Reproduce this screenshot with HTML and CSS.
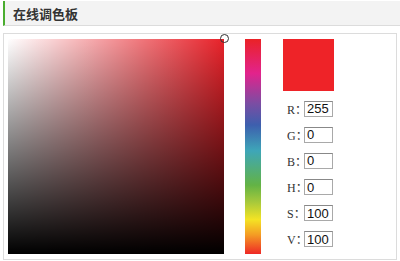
FILE: index.html
```html
<!DOCTYPE html>
<html>
    <head>
        <meta charset="UTF-8">
        <title>在线调色板</title>
        <link rel="stylesheet" href="styles.css">
    </head>
    <body>
        <div class="title-bar">
            <h2 class="title">在线调色板</h2>
        </div>
        <div class="picker">
            <div class="sat-box">
                <div class="sat-white"></div>
                <div class="sat-black"></div>
                <span class="marker"></span>
            </div>
            <div class="hue-bar"></div>
            <div class="side">
                <div class="swatch"></div>
                <div class="fields">
                    <div class="field"><label class="field-label">R：</label><input class="field-input" type="text" value="255"></div>
                    <div class="field"><label class="field-label">G：</label><input class="field-input" type="text" value="0"></div>
                    <div class="field"><label class="field-label">B：</label><input class="field-input" type="text" value="0"></div>
                    <div class="field"><label class="field-label">H：</label><input class="field-input" type="text" value="0"></div>
                    <div class="field"><label class="field-label">S：</label><input class="field-input" type="text" value="100"></div>
                    <div class="field"><label class="field-label">V：</label><input class="field-input" type="text" value="100"></div>
                </div>
            </div>
        </div>
    </body>
</html>
```
FILE: styles.css
```css
html {
    background-color: #fff;
}

body {
    margin: 0;
    font-family: "Liberation Sans", Arial, sans-serif;
}

.title-bar {
    margin: 1px 0 0 3px;
    height: 24px;
    background-color: #f3f3f3;
    border-left: 2px solid #4aad2f;
    border-bottom: 1px solid #dcdcdc;
    display: flex;
    align-items: center;
}

.title {
    margin: 0 0 0 8px;
    font-family: "Noto Sans CJK SC", sans-serif;
    font-size: 13px;
    font-weight: bold;
    color: #333;
    line-height: 1;
}

.picker {
    margin: 7px 3px 0 3px;
    border: 1px solid #dcdcdc;
    padding: 5px 4px;
    display: flex;
    box-sizing: border-box;
    height: 227px;
}

.sat-box {
    position: relative;
    width: 216px;
    height: 215px;
    background-color: #e8222a;
}

.sat-white {
    position: absolute;
    inset: 0;
    background: linear-gradient(to right, #fff, rgba(255, 255, 255, 0));
}

.sat-black {
    position: absolute;
    inset: 0;
    background: linear-gradient(to bottom, rgba(0, 0, 0, 0), #000);
}

.marker {
    position: absolute;
    right: -5px;
    top: -5px;
    width: 7px;
    height: 7px;
    border: 1px solid #333;
    border-radius: 50%;
}

.hue-bar {
    width: 16px;
    height: 215px;
    margin-left: 21px;
    background: linear-gradient(to bottom,
        #ea2226 0%,
        #e2238c 16%,
        #7b4da3 30%,
        #3d5fae 40%,
        #3ea6b8 52%,
        #63b345 68%,
        #a8c93b 76%,
        #f4e324 84%,
        #f49d24 91%,
        #ee2826 100%);
}

.side {
    margin-left: 22px;
}

.swatch {
    width: 51px;
    height: 52px;
    background-color: #ee2328;
}

.fields {
    margin-top: 10px;
    display: flex;
    flex-direction: column;
    gap: 11.2px;
}

.field {
    display: flex;
    align-items: center;
    height: 15px;
    padding-left: 4px;
}

.field-label {
    flex: 0 0 17px;
    min-width: 0;
    white-space: nowrap;
    overflow: visible;
    font-family: "Liberation Serif", "Noto Sans CJK SC", serif;
    font-size: 12px;
    color: #333;
}

.field-input {
    width: 29px;
    height: 16px;
    box-sizing: border-box;
    padding: 0 0 0 2px;
    border: 1px solid #a9a9a9;
    border-top-color: #888;
    font-family: "Liberation Sans", Arial, sans-serif;
    font-size: 13px;
    color: #111;
    outline: none;
}
```
